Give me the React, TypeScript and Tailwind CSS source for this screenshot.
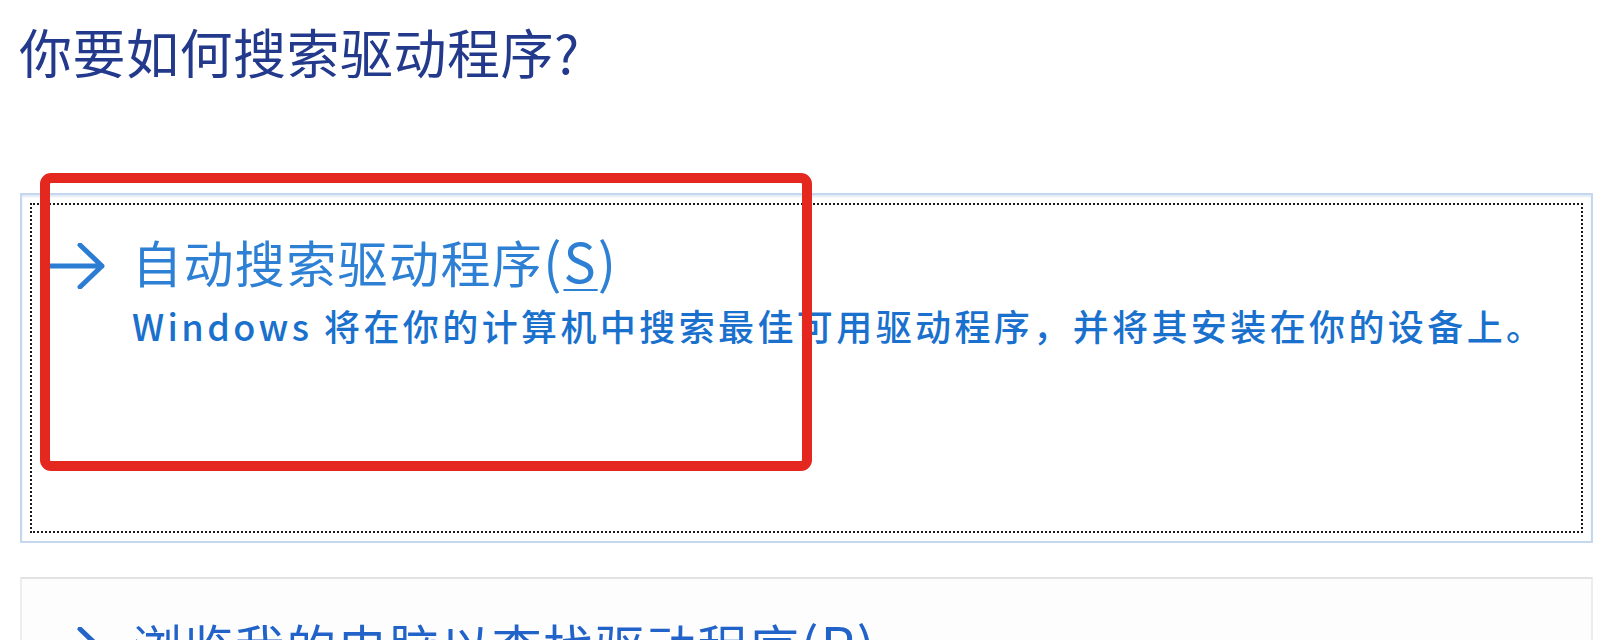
import React from "react";

const FONT = '"Noto Sans CJK SC", "Noto Sans", sans-serif';

function Arrow({ color }: { color: string }) {
  return (
    <svg width="62" height="46" viewBox="0 0 62 46" className="shrink-0 mt-[10px]">
      <path
        d="M2 23 H58 M36 2 L58 23 L36 44"
        fill="none"
        stroke={color}
        strokeWidth="5"
        strokeLinecap="round"
        strokeLinejoin="round"
      />
    </svg>
  );
}

function CommandLink({
  focused,
  title,
  accel,
  desc,
  headColor,
}: {
  focused: boolean;
  title: string;
  accel: string;
  desc?: string;
  headColor: string;
}) {
  return (
    <div
      className={
        focused
          ? "h-[350px] border-2 border-[#c3d8ee] bg-white p-[8px] shadow-[inset_0_2px_2px_rgba(170,195,225,0.35)]"
          : "h-[350px] border-2 border-[#ededed] border-t-[#e2e2e2] bg-[#fdfdfd] p-[8px]"
      }
    >
      <div
        className={
          focused
            ? "h-full border-2 border-dotted border-[#1a1a1a]"
            : "h-full border-2 border-transparent"
        }
      >
        <div className="flex items-start pt-[28px] pl-[12px]">
          <Arrow color={focused ? "#2a7dd2" : "#2365c8"} />
          <div className="ml-[26px] flex flex-col">
            <div
              className="text-[50px] leading-none tracking-[1.4px] whitespace-nowrap"
              style={{ color: headColor }}
            >
              {title}
              <span className="text-[54px] tracking-[2px]">
                (<span className="underline decoration-[2px] underline-offset-[6px]">{accel}</span>)
              </span>
            </div>
            {desc && (
              <div className="mt-[20px] text-[36px] leading-none tracking-[3.4px] font-medium text-[#1a71cd] whitespace-nowrap">
                {desc}
              </div>
            )}
          </div>
        </div>
      </div>
    </div>
  );
}

export default function App() {
  return (
    <div
      className="relative w-[1612px] h-[640px] overflow-hidden bg-white"
      style={{ fontFamily: FONT }}
    >
      <h1 className="pt-[25px] pl-[19px] text-[53px] leading-none tracking-[0.5px] text-[#22398c] font-normal whitespace-nowrap">
        你要如何搜索驱动程序?
      </h1>
      <div className="mt-[115px] pl-[20px] pr-[19px] flex flex-col gap-[34px]">
        <CommandLink
          focused
          title="自动搜索驱动程序"
          accel="S"
          desc="Windows 将在你的计算机中搜索最佳可用驱动程序，并将其安装在你的设备上。"
          headColor="#2d80d3"
        />
        <CommandLink
          focused={false}
          title="浏览我的电脑以查找驱动程序"
          accel="R"
          headColor="#2263c9"
        />
      </div>
      <div className="absolute left-[40px] top-[173px] w-[772px] h-[298px] border-[10px] border-[#e4271f] rounded-[11px]" />
    </div>
  );
}
